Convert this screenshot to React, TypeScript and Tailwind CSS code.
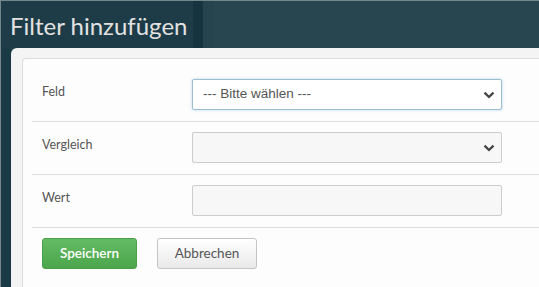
import React from 'react'

const ui = { fontFamily: 'Lato, "Open Sans", sans-serif' }
const arial = { fontFamily: '"Liberation Sans", Arial, sans-serif' }

function Chevron() {
  return (
    <svg width="12" height="8" viewBox="0 0 12 8" className="shrink-0">
      <path d="M1.5 1.6 L6 6 L10.5 1.6" fill="none" stroke="#444" strokeWidth="2.3" />
    </svg>
  )
}

function Row({ label, children }: { label: string; children: React.ReactNode }) {
  return (
    <div className="flex border-b border-[#dddddd] pt-[10px] pb-[11px]">
      <div className="w-[160px] pl-[10px] pt-[3px] text-[12.5px] leading-[20px] text-[#555]" style={ui}>
        {label}
      </div>
      {children}
    </div>
  )
}

export default function App() {
  return (
    <div className="flex h-[287px] w-[539px] flex-col overflow-hidden border-l border-t border-[#76858a] bg-[#284650]">
      <div className="flex h-[47px] shrink-0">
        <div className="flex w-[192px] items-center bg-[#1d3c47] pl-[9px] pt-[3px]">
          <h1 className="whitespace-nowrap text-[24px] leading-none text-[#e2e2e2]" style={ui}>
            Filter hinzufügen
          </h1>
        </div>
        <div className="w-[10px] bg-[#163440]" />
        <div className="w-[10px] bg-[#25444e]" />
        <div className="flex-1" />
      </div>

      <div className="flex flex-1">
        <div className="w-[10px] shrink-0 bg-[#1a3a45]" />
        <div className="flex-1 rounded-tl-[6px] bg-[#f4f4f4] pl-[11px] pt-[10px]">
          <div className="h-full w-[600px] rounded-tl-[4px] border-l border-t border-[#dcdcdc] bg-[#fdfdfd] pl-[9px] pt-[10px]">
            <Row label="Feld">
              <div
                className="flex h-[31px] w-[310px] items-center justify-between rounded-[2px] border border-[#9dbfd2] bg-white pl-[10px] pr-[6px] text-[13.5px] text-[#555] shadow-[0_0_3px_rgba(102,160,200,0.45)]"
                style={arial}
              >
                <span>--- Bitte wählen ---</span>
                <Chevron />
              </div>
            </Row>
            <Row label="Vergleich">
              <div className="flex h-[31px] w-[310px] items-center justify-end rounded-[2px] border border-[#cccccc] bg-[#f7f7f7] pr-[6px]">
                <Chevron />
              </div>
            </Row>
            <Row label="Wert">
              <div className="h-[31px] w-[310px] rounded-[2px] border border-[#cccccc] bg-[#f7f7f7]" />
            </Row>
            <div className="flex gap-[20px] pl-[10px] pt-[10px]">
              <button
                className="h-[31px] w-[95px] rounded-[3px] border border-[#4a9d4a] bg-gradient-to-b from-[#63bb63] to-[#4ca64c] text-[13.5px] font-semibold text-white"
                style={ui}
              >
                Speichern
              </button>
              <button
                className="h-[31px] w-[100px] rounded-[3px] border border-[#c4c4c4] bg-gradient-to-b from-white to-[#e9e9e9] text-[13.5px] text-[#555]"
                style={ui}
              >
                Abbrechen
              </button>
            </div>
          </div>
        </div>
      </div>
    </div>
  )
}
